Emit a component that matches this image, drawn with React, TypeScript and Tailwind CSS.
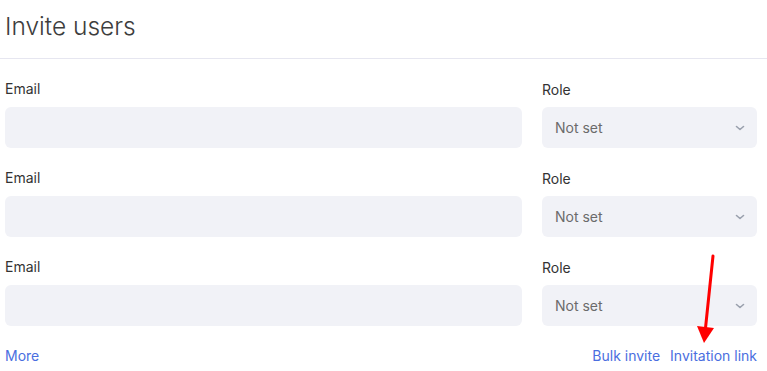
const rows = [0, 1, 2];

function Chevron() {
  return (
    <svg width="10" height="6" viewBox="0 0 10 6" fill="none" className="text-[#9aa0ad]">
      <path d="M1.5 1.5L5 4.5L8.5 1.5" stroke="currentColor" strokeWidth="1.6" strokeLinecap="round" strokeLinejoin="round" />
    </svg>
  );
}

export default function App() {
  return (
    <div
      className="relative w-[767px] h-[371px] bg-white text-[#333] overflow-hidden"
      style={{ fontFamily: "Inter, 'Noto Sans', sans-serif" }}
    >
      <div className="h-[59px] border-b border-[#e6e6f0] pl-[5px] pt-[10px]">
        <h1 className="text-[24.5px] leading-[32px] font-light text-[#3d3d3d]">Invite users</h1>
      </div>

      <div className="pl-[5px] pr-[10px] pt-[20px] flex flex-col gap-5">
        {rows.map((r) => (
          <div key={r} className="flex gap-5">
            <div className="w-[517px] flex flex-col gap-2">
              <label className="text-sm leading-5">Email</label>
              <input className="h-[41px] rounded-md bg-[#f1f2f7] outline-none px-3" />
            </div>
            <div className="w-[215px] flex flex-col gap-2">
              <label className="text-sm leading-5 mt-px">Role</label>
              <div className="h-[41px] rounded-md bg-[#f1f2f7] flex items-center justify-between pl-[13px] pr-[12px] -mt-px">
                <span className="text-sm text-[#6b6b6b]">Not set</span>
                <Chevron />
              </div>
            </div>
          </div>
        ))}
        <div className="flex justify-between text-sm leading-5 text-[#4a6ee0]">
          <a href="#">More</a>
          <div className="flex gap-[10px]">
            <a href="#">Bulk invite</a>
            <a href="#">Invitation link</a>
          </div>
        </div>
      </div>

      <svg className="absolute left-0 top-0 pointer-events-none" width="767" height="371">
        <line x1="713" y1="256" x2="705.5" y2="328" stroke="#ff0000" strokeWidth="3" strokeLinecap="round" />
        <polygon points="697,326 714,328 704,343" fill="#ff0000" />
      </svg>
    </div>
  );
}
